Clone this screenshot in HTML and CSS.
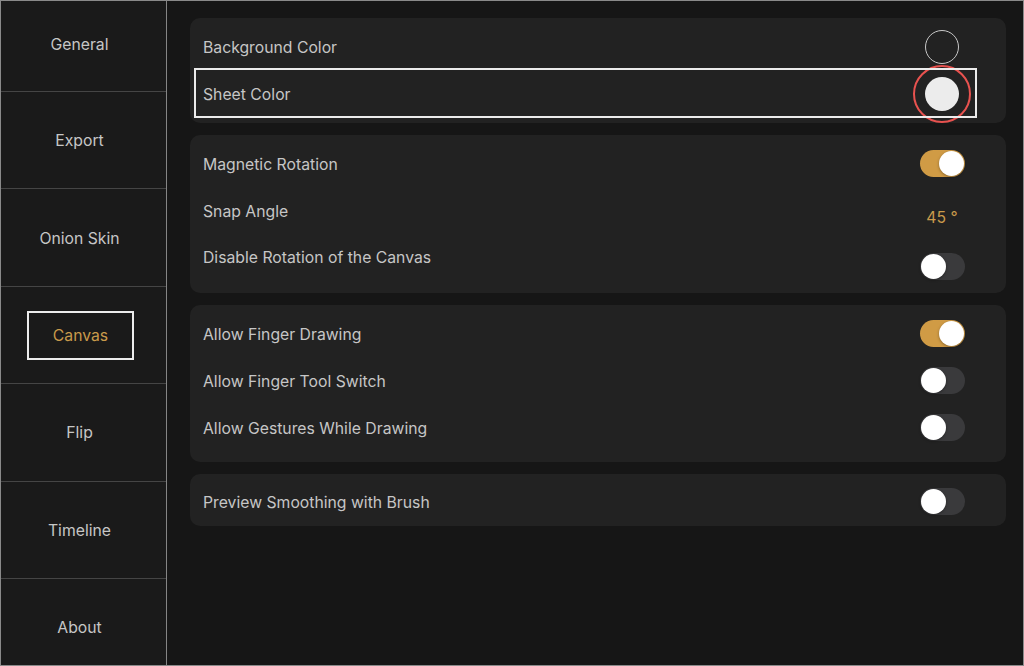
FILE: index.html
```html
<!DOCTYPE html>
<html lang="en">

<head>
  <meta charset="UTF-8">
  <meta name="viewport" content="width=device-width, initial-scale=1.0">
  <title>Settings - Canvas</title>
  <link rel="stylesheet" href="styles.css">
</head>

<body>
  <div class="app">
    <nav class="sidebar">
      <div class="nav-item">General</div>
      <div class="nav-item">Export</div>
      <div class="nav-item">Onion Skin</div>
      <div class="nav-item active"><span class="nav-box">Canvas</span></div>
      <div class="nav-item">Flip</div>
      <div class="nav-item">Timeline</div>
      <div class="nav-item">About</div>
    </nav>

    <main class="content">
      <section class="card card-colors">
        <div class="row">
          <span class="label">Background Color</span>
          <div class="ctl"><span class="swatch swatch-empty"></span></div>
        </div>
        <div class="row selected">
          <span class="label">Sheet Color</span>
          <div class="ctl"><span class="swatch swatch-white ring"></span></div>
        </div>
      </section>

      <section class="card card-rotation">
        <div class="row">
          <span class="label">Magnetic Rotation</span>
          <div class="ctl"><span class="toggle on"></span></div>
        </div>
        <div class="row">
          <span class="label">Snap Angle</span>
          <div class="ctl"><span class="value">45 °</span></div>
        </div>
        <div class="row row-tall">
          <span class="label">Disable Rotation of the Canvas</span>
          <div class="ctl"><span class="toggle"></span></div>
        </div>
      </section>

      <section class="card card-finger">
        <div class="row">
          <span class="label">Allow Finger Drawing</span>
          <div class="ctl"><span class="toggle on"></span></div>
        </div>
        <div class="row">
          <span class="label">Allow Finger Tool Switch</span>
          <div class="ctl"><span class="toggle"></span></div>
        </div>
        <div class="row">
          <span class="label">Allow Gestures While Drawing</span>
          <div class="ctl"><span class="toggle"></span></div>
        </div>
      </section>

      <section class="card card-preview">
        <div class="row">
          <span class="label">Preview Smoothing with Brush</span>
          <div class="ctl"><span class="toggle"></span></div>
        </div>
      </section>
    </main>
  </div>
</body>

</html>
```

FILE: styles.css
```css
* {
  box-sizing: border-box;
  margin: 0;
  padding: 0;
}
body {
  background: #161616;
  font-family: Inter, "Liberation Sans", sans-serif;
  font-size: 15.75px;
  color: #c6c6c6;
}
.app {
  display: flex;
  width: 1024px;
  height: 666px;
  border: 1px solid #8a8a8a;
  overflow: hidden;
}

/* left menu */
.sidebar {
  width: 166px;
  flex-shrink: 0;
  background: #1a1a1a;
  border-right: 1px solid #858585;
  display: flex;
  flex-direction: column;
}
.nav-item {
  height: 97.4px;
  flex-shrink: 0;
  border-top: 1px solid #454545;
  display: flex;
  align-items: center;
  justify-content: center;
  padding: 1px 8px 0 0;
}
.nav-item:first-child {
  height: 90px;
  border-top: none;
  padding: 0 8px 3px 0;
}
.nav-box {
  width: 107px;
  height: 49px;
  border: 2px solid #ececec;
  display: flex;
  align-items: center;
  justify-content: center;
  color: #c99a4b;
  margin-right: -2px;
}

/* settings */
.content {
  flex: 1;
  padding: 17px 17px 0 23px;
  display: flex;
  flex-direction: column;
  gap: 12px;
}
.card {
  background: #222222;
  border-radius: 10px;
  padding: 5px 0;
}
.card-colors {
  padding-bottom: 6px;
}
.card-rotation {
  padding-bottom: 6px;
}
.card-finger {
  padding-bottom: 11px;
}
.card-preview {
  padding: 4px 0 1px;
}
.row {
  position: relative;
  display: flex;
  align-items: center;
  height: 47px;
  padding: 0 34px 0 13px;
}
.label {
  flex: 1;
  line-height: 47px;
  padding-top: 2px;
}
.ctl {
  width: 60px;
  display: flex;
  justify-content: center;
}
.row-tall {
  height: 53px;
  align-items: flex-start;
}
.row-tall .label {
  padding-top: 0;
}
.row-tall .ctl {
  margin-top: 19px;
}
.selected::after {
  content: "";
  position: absolute;
  left: 4px;
  right: 29px;
  top: -2px;
  bottom: -1px;
  border: 2px solid #ececec;
}
.value {
  color: #c99a4b;
  margin-top: 14px;
}

/* colour swatches */
.swatch {
  position: relative;
  width: 34px;
  height: 34px;
  border-radius: 50%;
}
.swatch-empty {
  border: 1.5px solid #c8c8c8;
}
.swatch-white {
  background: #ececec;
}
.ring::after {
  content: "";
  position: absolute;
  left: -12px;
  top: -12px;
  right: -12px;
  bottom: -12px;
  border: 2.5px solid #e8524f;
  border-radius: 50%;
}

/* switches */
.toggle {
  position: relative;
  width: 45px;
  height: 27px;
  border-radius: 14px;
  background: #3a3a3c;
}
.toggle::after {
  content: "";
  position: absolute;
  top: 1px;
  left: 1px;
  width: 25px;
  height: 25px;
  border-radius: 50%;
  background: #ffffff;
  box-shadow: 0 1px 3px rgba(0, 0, 0, 0.35);
}
.toggle.on {
  background: #d09b45;
}
.toggle.on::after {
  left: 19px;
}
```
